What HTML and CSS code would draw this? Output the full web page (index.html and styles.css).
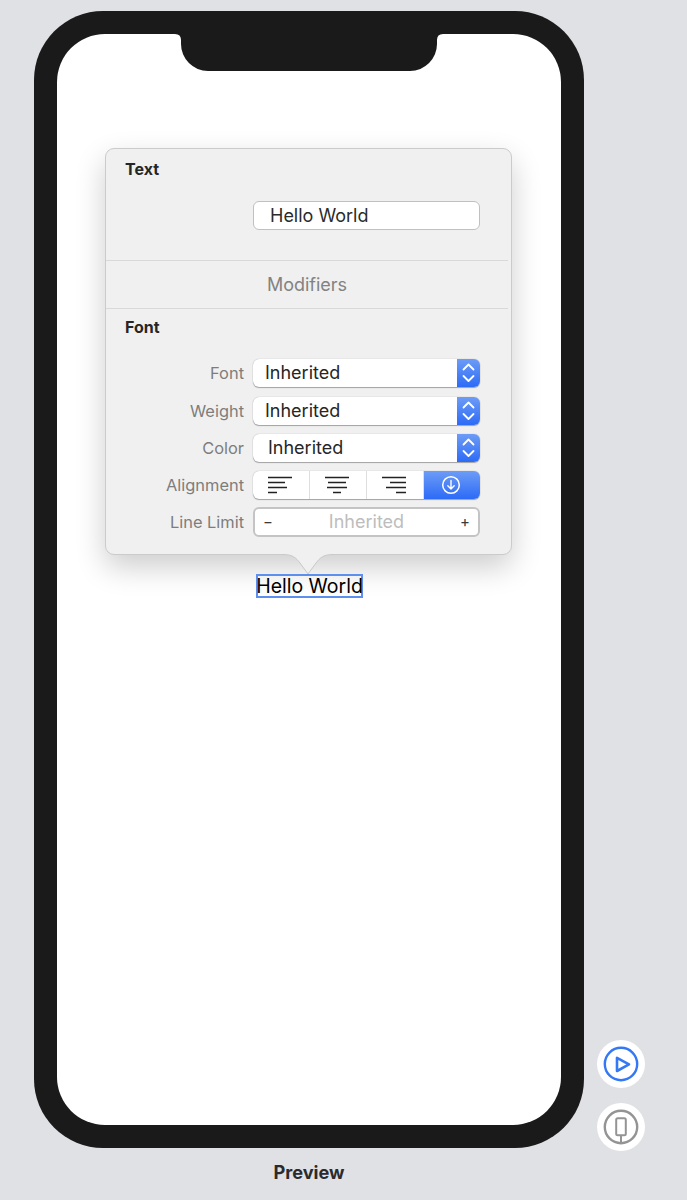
FILE: index.html
```html
<!DOCTYPE html>
<html>
<head>
	<title>Preview</title>
	<link rel="stylesheet" href="styles.css">
</head>
<body>
<div class="stage">
	<div class="device-col">
		<div class="phone">
			<div class="screen">
				<svg class="notch" width="268" height="37" viewBox="0 0 268 37">
					<path d="M0 0H268Q262 0 262 6V10A27 27 0 0 1 235 37H33A27 27 0 0 1 6 10V6Q6 0 0 0Z" fill="#1a1a1a"/>
				</svg>

				<div class="popover">
					<div class="title title-text">Text</div>
					<div class="text-row">
						<div class="field">Hello World</div>
					</div>
					<div class="modifiers">Modifiers</div>
					<div class="title title-font">Font</div>

					<div class="form">
						<label>Font</label>
						<div class="select"><span>Inherited</span><i class="chevrons"><svg width="23" height="28" viewBox="0 0 23 28"><path d="M6.500 10.500 11.500 5.500 16.500 10.500M6.500 17 11.500 22 16.500 17" fill="none" stroke="#fff" stroke-width="1.800" stroke-linecap="round" stroke-linejoin="round"/></svg></i></div>

						<label>Weight</label>
						<div class="select"><span>Inherited</span><i class="chevrons"><svg width="23" height="28" viewBox="0 0 23 28"><path d="M6.500 10.500 11.500 5.500 16.500 10.500M6.500 17 11.500 22 16.500 17" fill="none" stroke="#fff" stroke-width="1.800" stroke-linecap="round" stroke-linejoin="round"/></svg></i></div>

						<label>Color</label>
						<div class="select select-color"><span>Inherited</span><i class="chevrons"><svg width="23" height="28" viewBox="0 0 23 28"><path d="M6.500 10.500 11.500 5.500 16.500 10.500M6.500 17 11.500 22 16.500 17" fill="none" stroke="#fff" stroke-width="1.800" stroke-linecap="round" stroke-linejoin="round"/></svg></i></div>

						<label>Alignment</label>
						<div class="segments">
							<div class="seg">
								<svg width="26" height="18" viewBox="0 0 26 18"><path d="M1 1.500H25M1 6.500H18M1 11.500H20M1 16.500H10" stroke="#222" stroke-width="1.400"/></svg>
							</div>
							<div class="seg">
								<svg width="26" height="18" viewBox="0 0 26 18"><path d="M1 1.500H25M4 6.500H22M3 11.500H23M9 16.500H17" stroke="#222" stroke-width="1.400"/></svg>
							</div>
							<div class="seg">
								<svg width="26" height="18" viewBox="0 0 26 18"><path d="M1 1.500H25M9 6.500H25M5 11.500H25M15 16.500H25" stroke="#222" stroke-width="1.400"/></svg>
							</div>
							<div class="seg seg-on">
								<svg width="20" height="20" viewBox="0 0 20 20"><circle cx="10" cy="10" r="8.300" fill="none" stroke="#fff" stroke-width="1.500"/><path d="M10 5.500V14M6.800 10.800 10 14 13.200 10.800" fill="none" stroke="#fff" stroke-width="1.400" stroke-linecap="round" stroke-linejoin="round"/></svg>
							</div>
						</div>

						<label class="limit-label">Line Limit</label>
						<div class="stepper">
							<span class="step">&minus;</span>
							<span class="placeholder">Inherited</span>
							<span class="step">+</span>
						</div>
					</div>

					<svg class="arrow" width="50" height="21" viewBox="0 0 50 21">
						<path d="M0 .5C10 .5 13 4 17 9L25 20 33 9C37 4 40 .5 50 .5V0H0Z" fill="#f0f0f0"/>
						<path d="M0 .5C10 .5 13 4 17 9L25 20 33 9C37 4 40 .5 50 .5" fill="none" stroke="#c9c9c9"/>
					</svg>
				</div>

				<div class="selected">Hello World</div>
			</div>
		</div>
		<div class="caption">Preview</div>
	</div>

	<div class="side">
		<div class="round">
			<svg width="48" height="48" viewBox="0 0 48 48"><circle cx="24" cy="24" r="16.200" fill="none" stroke="#3478f6" stroke-width="2.400"/><path d="M20 17.800V31L32 24.400Z" fill="none" stroke="#3478f6" stroke-width="2.600" stroke-linejoin="round"/></svg>
		</div>
		<div class="round">
			<svg width="48" height="48" viewBox="0 0 48 48"><circle cx="24" cy="24" r="16.200" fill="none" stroke="#949494" stroke-width="2.400"/><rect x="19.200" y="15.200" width="9.600" height="17" rx="1.500" fill="none" stroke="#949494" stroke-width="2"/><path d="M24 33V40" stroke="#949494" stroke-width="2"/></svg>
		</div>
	</div>
</div>
</body>
</html>
```

FILE: styles.css
```css
*{
	padding: 0;
	margin: 0;
	box-sizing: border-box;
}
body{
	background: #e0e1e5;
	font-family: Inter, "Liberation Sans", sans-serif;
	color: #262626;
}
.stage{
	display: flex;
	align-items: flex-start;
	padding: 11px 0 0 34px;
}
.device-col{
	width: 550px;
}
.phone{
	width: 550px;
	height: 1137px;
	background: #1a1a1a;
	border-radius: 69px;
	padding: 23px;
}
.screen{
	position: relative;
	height: 1091px;
	background: #fff;
	border-radius: 48px;
	padding: 114px 0 0 48px;
}
.notch{
	position: absolute;
	left: 118px;
	top: 0;
	display: block;
}
.caption{
	margin-top: 14px;
	text-align: center;
	font-size: 18.200px;
	line-height: 21px;
	font-weight: 700;
	color: #2b2b2e;
}
.side{
	display: flex;
	flex-direction: column;
	gap: 15px;
	margin: 1029px 0 0 13px;
}
.round{
	width: 48px;
	height: 48px;
	background: #fff;
	border-radius: 50%;
}
.round svg{
	display: block;
}

/* popover */
.popover{
	position: relative;
	width: 407px;
	height: 407px;
	background: #f0f0f0;
	border: 1px solid #cbcbcb;
	border-radius: 9px;
	box-shadow: 0 12px 30px rgba(0,0,0,.2);
}
.title{
	font-size: 16px;
	line-height: 20px;
	font-weight: 700;
	padding-left: 19px;
}
.title-text{
	padding-top: 10px;
	height: 31px;
}
.title-font{
	margin-top: 8px;
}
.text-row{
	padding: 21px 28px 30px 147px;
	border-bottom: 1px solid #d9d9d9;
	margin-right: 3px;
}
.field{
	height: 29px;
	background: #fff;
	border: 1px solid #c0c0c0;
	border-radius: 6px;
	padding-left: 16px;
	font-size: 18px;
	line-height: 28px;
	color: #2b2b2b;
}
.modifiers{
	height: 48px;
	margin-right: 3px;
	border-bottom: 1px solid #d9d9d9;
	text-align: center;
	font-size: 18px;
	line-height: 47px;
	color: #828282;
}
.form{
	display: grid;
	grid-template-columns: 138px 227px;
	grid-template-rows: 29px 28px 28px 27px 30px;
	row-gap: 9px;
	column-gap: 9px;
	margin-top: 22px;
}
.form label{
	text-align: right;
	font-size: 16.400px;
	line-height: 28px;
	color: #7d7d7d;
}
.form .limit-label{
	line-height: 30px;
}

/* pop up buttons */
.select{
	display: flex;
	justify-content: space-between;
	height: 28px;
	background: #fff;
	border-radius: 6px;
	box-shadow: 0 0 1px rgba(0,0,0,.35), 0 1px 1px rgba(0,0,0,.3);
	font-size: 18px;
	line-height: 28px;
	padding-left: 12px;
	overflow: hidden;
}
.select-color{
	padding-left: 15px;
}
.chevrons{
	display: block;
	width: 23px;
	height: 28px;
	background: linear-gradient(#6d9cf6, #2d6bf7);
}
.chevrons svg{
	display: block;
}

/* alignment */
.segments{
	display: flex;
	height: 28px;
	background: #fff;
	border-radius: 6px;
	box-shadow: 0 0 1px rgba(0,0,0,.35), 0 1px 1px rgba(0,0,0,.3);
	overflow: hidden;
}
.seg{
	flex: 1;
	display: flex;
	align-items: center;
	justify-content: center;
	padding-right: 2px;
	border-right: 1px solid #dedede;
}
.seg-on{
	border-right: 0;
	background: linear-gradient(#6d9cf6, #2d6bf7);
}

/* stepper */
.stepper{
	height: 30px;
	display: flex;
	align-items: center;
	justify-content: space-between;
	background: #fff;
	border: 2px solid #c4c4c4;
	border-radius: 6px;
	padding: 0 8px;
}
.step{
	font-size: 15px;
	line-height: 26px;
	color: #3a3a3a;
}
.placeholder{
	font-size: 18px;
	line-height: 26px;
	color: #bdbdbd;
}

.arrow{
	position: absolute;
	left: 177px;
	top: 405px;
	display: block;
}
.selected{
	position: absolute;
	left: 199px;
	top: 540px;
	width: 107px;
	height: 24px;
	display: flex;
	justify-content: center;
	border: 2px solid #5d8fee;
	font-size: 19.500px;
	line-height: 21px;
	white-space: nowrap;
	color: #000;
}
```
